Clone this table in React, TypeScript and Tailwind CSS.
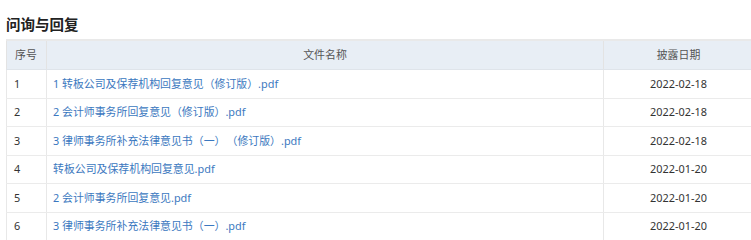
import React from "react";

const rows = [
  { no: "1", name: "1 转板公司及保荐机构回复意见（修订版）.pdf", date: "2022-02-18" },
  { no: "2", name: "2 会计师事务所回复意见（修订版）.pdf", date: "2022-02-18" },
  { no: "3", name: "3 律师事务所补充法律意见书（一）\u200A（修订版）.pdf", date: "2022-02-18" },
  { no: "4", name: "转板公司及保荐机构回复意见.pdf", date: "2022-01-20" },
  { no: "5", name: "2 会计师事务所回复意见.pdf", date: "2022-01-20" },
  { no: "6", name: "3 律师事务所补充法律意见书（一）.pdf", date: "2022-01-20" },
];

export default function App() {
  return (
    <div
      className="w-[751px] h-[240px] overflow-hidden bg-white pl-[6px]"
      style={{ fontFamily: '"Noto Sans", "Noto Sans CJK SC", sans-serif' }}
    >
      <div className="h-[39px] pt-[14px]">
        <h2 className="text-[14.5px] leading-[20px] font-bold text-[#222]">问询与回复</h2>
      </div>
      <div className="w-[746px] border-t-2 border-[#e9e9e9]">
        <div className="grid grid-cols-[41px_557px_1fr] h-[29px] bg-[#e8eef5] border-b border-[#dfe4ea] text-[10.9px] text-[#555]">
          <div className="border-l border-r border-[#e3e3e3] flex items-center pl-[8px]">序号</div>
          <div className="border-r border-[#e3e3e3] flex items-center justify-center">文件名称</div>
          <div className="flex items-center justify-center pl-px">披露日期</div>
        </div>
        {rows.map((r) => (
          <div
            key={r.no + r.name}
            className="grid grid-cols-[41px_557px_1fr] h-[28.5px] border-b border-[#ebebeb] text-[10.9px]"
          >
            <div className="border-l border-r border-[#e8e8e8] flex items-center pl-[7px] text-[#333]">{r.no}</div>
            <div className="border-r border-[#e8e8e8] flex items-center pl-[6px] text-[#3b78c0] whitespace-pre">{r.name}</div>
            <div className="flex items-center justify-center pl-px text-[#333]">{r.date}</div>
          </div>
        ))}
      </div>
    </div>
  );
}
